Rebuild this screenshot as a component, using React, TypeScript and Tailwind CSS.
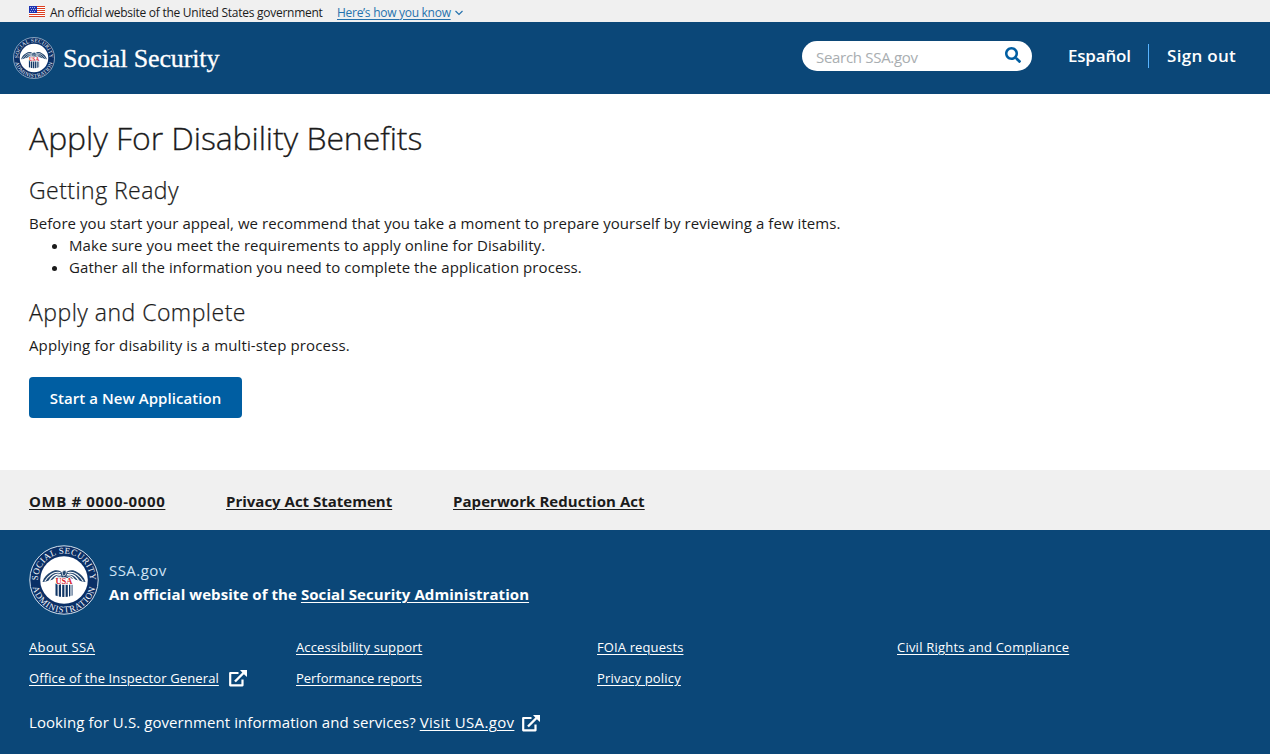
import React from "react";
import { FaSearch } from "react-icons/fa";

function Seal({ size, id }: { size: number; id: string }) {
  return (
    <svg width={size} height={size} viewBox="0 0 70 70" className="shrink-0" aria-label="Social Security Administration seal">
      <defs>
        <path id={id + "-top"} d="M9.200 38A26 26 0 1 1 60.800 38" />
        <path id={id + "-bottom"} d="M3.200 32A32 32 0 1 0 66.800 32" />
      </defs>
      <circle cx="35" cy="35" r="34.200" fill="#0a2f66" stroke="#d5e2ee" strokeWidth="1" />
      <circle cx="35" cy="35" r="23.800" fill="#fff" />
      <g fill="#f1f5fa" fontFamily="Liberation Serif, serif" fontSize="9">
        <text textAnchor="middle" letterSpacing="0.300">
          <textPath href={"#" + id + "-top"} startOffset="50%">SOCIAL SECURITY</textPath>
        </text>
        <text textAnchor="middle" letterSpacing="0.700">
          <textPath href={"#" + id + "-bottom"} startOffset="50%">ADMINISTRATION</textPath>
        </text>
      </g>
      <path d="M34 28C31 25 26 24 22 27C18 29 15 32 13.500 37L17 36.500L20 35.500L22.500 35L25 34L27 33.500L30 33H40L43 33.500L45 34L47.500 35L50 35.500L53 36.500L56.500 37C55 32 52 29 48 27C44 24 39 25 36 28Z" fill="#23466f" />
      <g fill="none" stroke="#fff" strokeWidth="1.100" strokeLinecap="round">
        <path d="M31 27.500C25 26 20 30 16 36M31.500 29.500C27 28 23 31 20 36M32 31C29 30 26 32 24 35.500" />
        <path d="M39 27.500C45 26 50 30 54 36M38.500 29.500C43 28 47 31 50 36M38 31C41 30 44 32 46 35.500" />
      </g>
      <path d="M33 27Q35 24 37.500 26.500L36.500 30L34 31Z" fill="#23466f" stroke="#fff" strokeWidth="0.700" />
      <path d="M26.500 38.500H43.500V50.500Q35 53.500 26.500 50.500Z" fill="#0f3565" />
      <path d="M29.200 38V54M32.600 38V55M36 38V55M39.400 38V54M42 38V53" stroke="#fff" strokeWidth="1.200" />
      <text x="35" y="39.300" textAnchor="middle" fontFamily="Liberation Serif, serif" fontWeight="700" fontSize="8.500" fill="#d8202c" stroke="#fff" strokeWidth="1.600" paintOrder="stroke">USA</text>
    </svg>
  );
}

function Flag() {
  return (
    <svg width="16" height="11" viewBox="0 0 16 11" shapeRendering="crispEdges" className="shrink-0">
      <rect width="16" height="11" fill="#fff" />
      {[0, 2, 4, 6, 8, 10].map((y) => (
        <rect key={y} y={y} width="16" height="1" fill="#db3e1f" />
      ))}
      <rect width="8" height="7" fill="#1e33b1" />
      {[1, 3, 5].map((y) =>
        [1, 3, 5].map((x) => <rect key={x + "-" + y} x={x + (y === 3 ? 1 : 0)} y={y} width="1" height="1" fill="#a9b4e6" />),
      )}
    </svg>
  );
}

function External() {
  return (
    <svg width="18" height="17" viewBox="0 0 18 17" fill="none" stroke="#fff" className="shrink-0">
      <path d="M9.500 3H1.200V15.300H13.500V9.500" strokeWidth="2.200" strokeLinejoin="round" />
      <path d="M6 11.500L14.500 3" strokeWidth="2.400" />
      <path d="M11 0H18V7L15.500 4.800L13.200 2.500Z" fill="#fff" stroke="none" />
    </svg>
  );
}

const link = "underline decoration-1 underline-offset-2";

export default function App() {
  return (
    <div className="flex h-[754px] w-[1270px] flex-col overflow-hidden bg-white font-['Open_Sans','Noto_Sans',sans-serif] text-[#1b1b1b] whitespace-nowrap">
      <div className="flex h-[22px] items-center bg-[#f0f0f0] pl-[29px] text-xs leading-[22px]">
        <Flag />
        <span className="ml-[5px] w-[287px] pt-[3px] tracking-[-0.27px]">An official website of the United States government</span>
        <a className={"pt-[3px] tracking-[-0.28px] text-[#2672ad] " + link}>Here’s how you know</a>
        <svg width="8" height="6" viewBox="0 0 8 6" className="mt-1 ml-1" fill="none" stroke="#2672ad" strokeWidth="1.200">
          <path d="M0.500 1L4 4.500L7.500 1" />
        </svg>
      </div>

      <header className="flex h-[72px] items-start bg-[#0b4778] text-white">
        <div className="mt-[15px] ml-[13px] flex h-[42px] items-center">
          <Seal size={42} id="head" />
          <span className="ml-2 pt-[2px] font-['Liberation_Serif',serif] text-[26px] leading-[42px] tracking-[-0.12px] [-webkit-text-stroke:0.3px_white]">Social Security</span>
        </div>
        <div className="mt-[19px] ml-auto flex h-[30px] w-[230px] items-center justify-between rounded-full bg-white pr-[11px] pl-[14px]">
          <span className="pt-[3px] text-[15px] tracking-[-0.3px] text-[#a9aeb1]">Search SSA.gov</span>
          <FaSearch className="mb-[2px] size-4 text-[#005ea2]" />
        </div>
        <nav className="mt-[22px] ml-9 flex h-6 w-[202px] items-center text-[17px] leading-6 font-semibold">
          <span className="w-20 tracking-[-0.2px]">Español</span>
          <span className="h-6 w-px bg-[#58b4ff]" />
          <span className="ml-[18px] tracking-[0.3px]">Sign out</span>
        </nav>
      </header>

      <main className="flex h-[376px] flex-col items-start pl-[29px] text-[15px] leading-[22px] tracking-[0.055px]">
        <h1 className="mt-[23px] text-[32px] leading-[42px] font-light tracking-[-0.09px] [-webkit-text-stroke:0.3px_#1b1b1b]">Apply For Disability Benefits</h1>
        <h2 className="mt-[15px] text-[23px] leading-8 font-light tracking-[0.45px] [-webkit-text-stroke:0.25px_#1b1b1b]">Getting Ready</h2>
        <p className="mt-[6px]">Before you start your appeal, we recommend that you take a moment to prepare yourself by reviewing a few items.</p>
        <ul className="list-disc pl-10 tracking-[0.07px]">
          <li>Make sure you meet the requirements to apply online for Disability.</li>
          <li>Gather all the information you need to complete the application process.</li>
        </ul>
        <h2 className="mt-[18px] text-[23px] leading-8 font-light tracking-[0.48px] [-webkit-text-stroke:0.25px_#1b1b1b]">Apply and Complete</h2>
        <p className="mt-[6px] tracking-[0.14px]">Applying for disability is a multi-step process.</p>
        <button className="mt-[21px] h-[41px] w-[213px] rounded bg-[#005ea2] pt-px text-[15px] font-semibold text-white">Start a New Application</button>
      </main>

      <nav className="flex h-[60px] items-center bg-[#f0f0f0] pt-[3px] pl-[29px] text-[15px] font-bold">
        <div className="w-[197px] tracking-[0.62px]"><a className={link}>OMB # 0000-0000</a></div>
        <div className="w-[227px]"><a className={link}>Privacy Act Statement</a></div>
        <a className={"tracking-[0.06px] " + link}>Paperwork Reduction Act</a>
      </nav>

      <footer className="flex h-[224px] flex-col bg-[#0b4778] pl-[29px] text-white">
        <div className="mt-[15px] flex h-[70px]">
          <Seal size={70} id="foot" />
          <div className="ml-[10px] pt-[13px] text-[15px] leading-6">
            <p className="text-[#d0e4f5] tracking-[0.45px]">SSA.gov</p>
            <p className="font-bold tracking-[0.07px]">An official website of the <a className={link}>Social Security Administration</a></p>
          </div>
        </div>
        <div className="mt-[17px] grid grid-cols-[267px_301px_300px_auto] text-[13px] leading-[31px] tracking-[0.12px]">
          <a className={"tracking-[0.4px] " + link}>About SSA</a>
          <a className={link}>Accessibility support</a>
          <a className={link}>FOIA requests</a>
          <a className={"tracking-[0.22px] " + link}>Civil Rights and Compliance</a>
          <div className="flex items-center">
            <a className={"w-[200px] " + link}>Office of the Inspector General</a>
            <External />
          </div>
          <a className={"tracking-[-0.04px] " + link}>Performance reports</a>
          <a className={"tracking-[0.18px] " + link}>Privacy policy</a>
        </div>
        <div className="mt-[17px] flex h-6 items-center text-[15px]">
          <span className="w-[493px] pb-px tracking-[0.08px]">Looking for U.S. government information and services? <a className={"tracking-[0.35px] " + link}>Visit USA.gov</a></span>
          <External />
        </div>
      </footer>
    </div>
  );
}
